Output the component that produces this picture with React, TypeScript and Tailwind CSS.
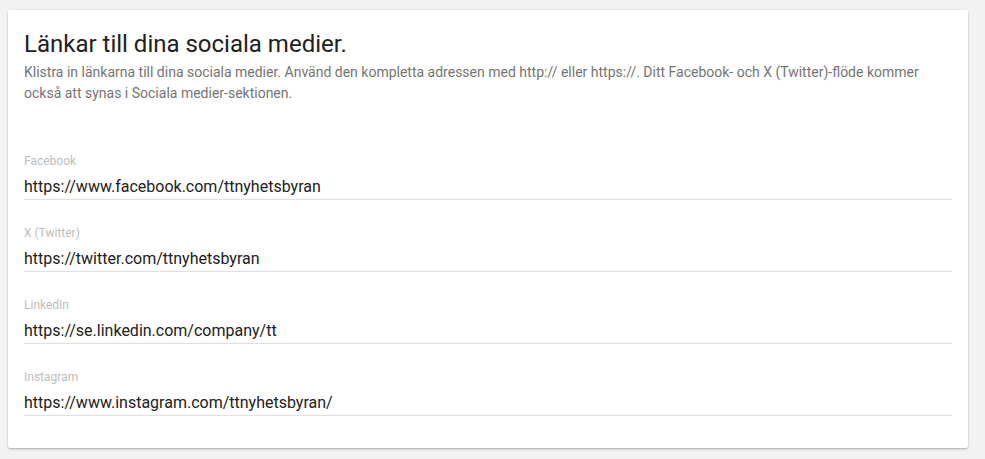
import React from 'react';

const fields = [
  { label: 'Facebook', value: 'https://www.facebook.com/ttnyhetsbyran' },
  { label: 'X (Twitter)', value: 'https://twitter.com/ttnyhetsbyran' },
  { label: 'LinkedIn', value: 'https://se.linkedin.com/company/tt' },
  { label: 'Instagram', value: 'https://www.instagram.com/ttnyhetsbyran/' },
];

function Field({ label, value }: { label: string; value: string }) {
  return (
    <div className="flex flex-col">
      <label className="text-[12px] leading-[16px] text-[#bdbdbd]">{label}</label>
      <input
        className="mt-[6px] h-[25px] w-full border-b border-[#e0e0e0] bg-transparent pb-px text-[16px] leading-[24px] text-[#212121] outline-none"
        defaultValue={value}
      />
    </div>
  );
}

export default function App() {
  return (
    <div className="min-h-[459px] w-full bg-[#f2f2f2] pl-[8px] pt-[10px] font-['Roboto',sans-serif]">
      <div className="w-[960px] rounded-[2px] bg-white px-4 pb-[32px] pt-[18px] shadow-[0_1px_3px_rgba(0,0,0,0.2),0_1px_1px_rgba(0,0,0,0.12)]">
        <h2 className="text-[24px] leading-[32px] text-[#212121]">Länkar till dina sociala medier.</h2>
        <p className="mt-[2px] text-[14px] leading-[21px] text-[#757575]">
          Klistra in länkarna till dina sociala medier. Använd den kompletta adressen med http:// eller https://. Ditt Facebook- och X (Twitter)-flöde kommer också att synas i Sociala medier-sektionen.
        </p>
        <div className="mt-[49px] flex flex-col gap-[25px]">
          {fields.map((f) => (
            <Field key={f.label} label={f.label} value={f.value} />
          ))}
        </div>
      </div>
    </div>
  );
}
